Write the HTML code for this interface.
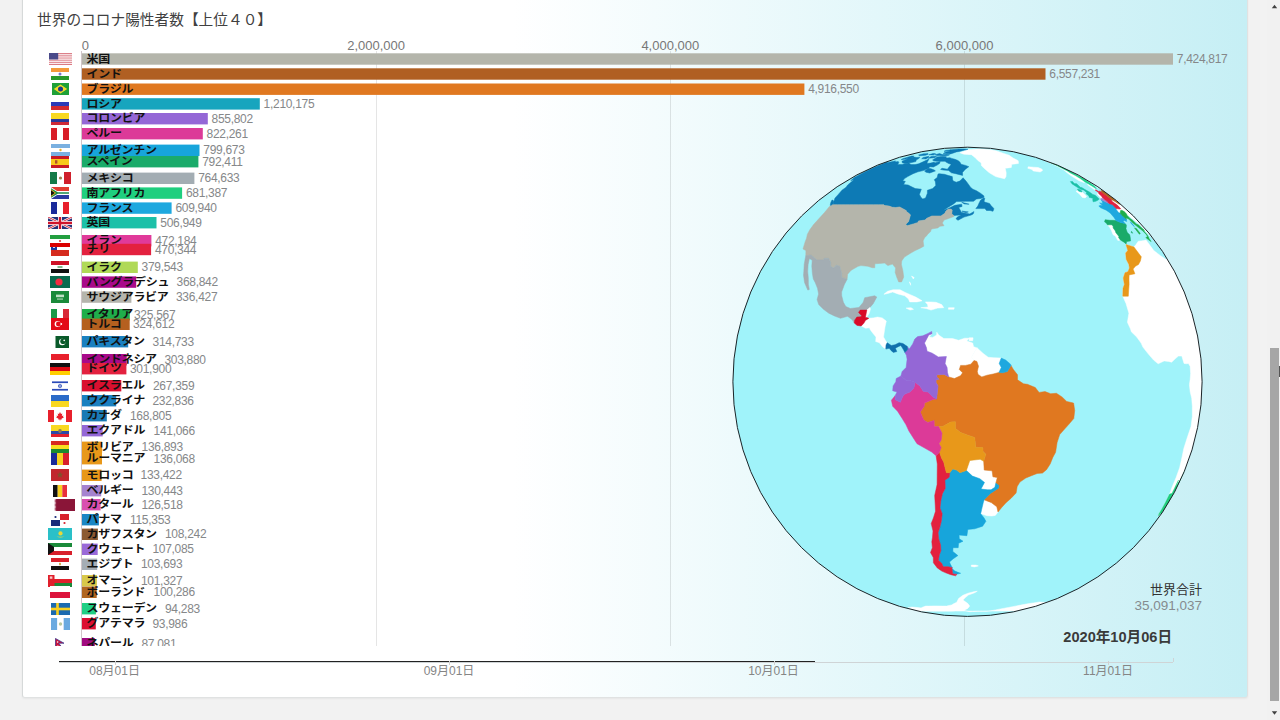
<!DOCTYPE html><html lang="ja"><head><meta charset="utf-8"><title>世界のコロナ陽性者数</title><style>
*{box-sizing:border-box}
html,body{margin:0;padding:0}
body{width:1280px;height:720px;overflow:hidden;background:#f2f2f2;font-family:"Liberation Sans","Noto Sans CJK JP",sans-serif;position:relative}
#card{position:absolute;left:22px;top:-6px;width:1226px;height:704px;border:1px solid #e0e2e2;border-left-color:#d6d9d9;border-radius:3px;background:linear-gradient(to right,#ffffff 0%,#ffffff 40%,#c6eff5 100%);box-shadow:0 1px 2px rgba(0,0,0,.05)}
#stage{position:absolute;left:0;top:0;width:1280px;height:720px;overflow:hidden}
.title{position:absolute;left:37px;top:9.8px;font-size:14.7px;line-height:20px;color:#404040;white-space:nowrap;font-family:"Liberation Sans","Noto Sans CJK JP",sans-serif}
.ax{position:absolute;top:38px;font-size:13px;line-height:15px;color:#777;white-space:nowrap;transform:translateX(-50%)}
.grid{position:absolute;top:51px;width:1px;height:595px;background:rgba(0,0,0,.13)}
#plot{position:absolute;left:0;top:0;width:1280px;height:646px;overflow:hidden}
.bar{position:absolute;display:block}
.lbl{position:absolute;left:86.6px;font-size:12px;line-height:12px;font-weight:bold;color:#111;white-space:nowrap;font-family:"Liberation Sans","Noto Sans CJK JP",sans-serif;letter-spacing:-0.3px;transform:scaleY(0.9);transform-origin:0 50%}
.val{position:absolute;font-size:12px;line-height:12px;color:#858789;white-space:nowrap;letter-spacing:-0.3px}
.flag{position:absolute;height:12px;display:block}
.tl{position:absolute}
.tlab{position:absolute;top:665px;font-size:12px;line-height:13px;color:#858585;white-space:nowrap;transform:translateX(-50%);font-family:"Liberation Sans","Noto Sans CJK JP",sans-serif}
.tick{position:absolute;top:661px;width:1px;height:4px;background:#d0d0d0}
.tot1{position:absolute;right:78px;top:582px;font-size:13px;line-height:16px;color:#333;white-space:nowrap;font-family:"Liberation Sans","Noto Sans CJK JP",sans-serif}
.tot2{position:absolute;right:78px;top:597.5px;font-size:13.5px;line-height:15px;color:#858b8f;white-space:nowrap}
.date{position:absolute;right:108px;top:627px;font-size:14.6px;line-height:20px;font-weight:bold;color:#3a3a3a;white-space:nowrap;font-family:"Liberation Sans","Noto Sans CJK JP",sans-serif}
</style></head><body>
<div id="card"></div><div id="stage">
<div class="title">世界のコロナ陽性者数【上位４０】</div>
<div class="ax" style="left:85.4px">0</div>
<div class="ax" style="left:376.1px">2,000,000</div>
<div class="ax" style="left:670.3px">4,000,000</div>
<div class="ax" style="left:964.5px">6,000,000</div>
<div class="grid" style="left:81px;background:rgba(120,90,100,.35)"></div>
<div class="grid" style="left:376.2px;background:rgba(0,0,0,.10)"></div>
<div class="grid" style="left:670.1px;background:rgba(0,0,0,.10)"></div>
<div class="grid" style="left:964.3px;background:rgba(0,0,0,.10)"></div>
<svg style="position:absolute;left:725px;top:140px" width="485" height="485" viewBox="0 0 485 485">
<defs><clipPath id="gc"><circle cx="242.5" cy="241.8" r="234.6"/></clipPath></defs>
<circle cx="242.5" cy="241.8" r="234.6" fill="#a0f3fa"/>
<g clip-path="url(#gc)" stroke-linejoin="round">
<path d="M198.9,473.4 197.7,473.0 196.7,472.6 195.8,472.2 195.1,471.9 194.5,471.6 194.1,471.5 191.9,470.9 189.7,470.4 187.8,469.9 186.0,469.4 184.5,468.9 183.2,468.4 183.0,468.1 183.1,467.8 183.4,467.5 184.4,467.4 185.7,467.2 187.2,467.1 190.0,467.3 193.0,467.6 196.1,467.9 197.3,467.3 198.8,466.7 200.6,466.1 203.6,466.1 206.9,466.0 210.3,465.9 214.0,466.0 217.8,466.1 221.6,466.1 224.0,465.5 226.6,464.9 229.0,463.6 231.7,462.3 233.6,458.5 237.9,455.3 243.0,453.2 249.5,451.6 252.3,451.2 249.7,452.7 243.4,455.1 240.1,457.8 238.0,460.1 242.9,463.6 244.7,466.1 242.8,468.4 240.8,469.4 239.1,470.4 241.9,471.1 244.4,471.7 247.2,471.6 250.0,471.4 252.9,471.3 255.6,471.3 258.4,471.3 261.0,471.3 263.4,471.1 265.8,470.8 270.5,469.9 275.6,468.9 279.4,468.2 283.3,467.5 287.3,466.7 291.4,465.9 295.6,465.1 299.8,464.3 304.1,463.6 308.4,462.9 311.3,462.5 314.2,462.0 316.1,462.1 317.6,462.2 318.9,462.3 320.2,462.3 321.3,462.3 322.0,462.3 323.4,461.9 324.5,461.6 325.4,461.3 326.1,461.1 326.7,461.2 327.0,461.4 328.6,461.3 330.0,461.5 331.1,462.0 328.4,463.8 325.5,465.7 322.4,467.7 318.5,469.9 314.4,472.0 310.1,474.0 308.8,475.8 307.1,477.8 304.9,480.0 301.0,482.3 296.6,484.4 292.0,486.6 287.3,488.7 282.2,490.8 276.8,492.7 270.4,493.9 264.0,494.9 257.5,495.5 250.9,495.8 244.5,495.7 238.1,495.3 231.7,495.4 225.1,495.1 218.5,494.6 212.7,493.0 207.2,491.3 202.0,489.4 198.0,487.1 194.4,484.9 191.3,482.8 188.7,480.7 186.6,478.8 184.9,477.1 183.9,475.5 183.3,474.2 183.0,473.1 190.9,473.4 199.2,474.0 201.1,474.7 203.2,475.5 205.6,476.2 208.1,477.0 210.8,477.8 213.7,478.5 216.8,479.2 220.0,479.8 223.3,480.4 226.7,480.9 230.2,481.3 233.8,481.6 237.5,481.8 241.2,481.9 244.8,481.9 248.5,481.7 252.1,481.5 255.7,481.2 259.1,480.7 262.5,480.2 265.8,479.6 268.9,479.0 271.8,478.3 274.6,477.5 277.2,476.8 279.7,476.0 281.9,475.3 283.9,474.6 285.7,473.9 287.3,473.3 288.7,472.7 289.9,472.2 290.8,471.8 291.6,471.4 292.1,471.2 292.4,471.1 292.4,471.0 292.3,471.0 291.9,471.0 291.2,471.0 290.4,471.0 289.3,471.0 287.9,471.1 286.4,471.1 284.6,471.1 282.6,471.1 280.5,471.1 278.2,471.1 275.6,471.1 273.0,471.1 270.2,471.1 267.2,471.1 264.2,471.1 261.0,471.1 257.7,471.1 254.4,471.1 251.0,471.1 247.6,471.1 244.2,471.1 240.8,471.1 237.3,471.1 233.9,471.1 230.6,471.1 227.3,471.2 224.1,471.2 220.9,471.2 217.9,471.2 215.0,471.2 212.2,471.2 209.6,471.2 207.2,471.2 204.9,471.2 202.8,471.2 200.9,471.2 199.2,471.2 197.7,471.2 196.5,471.2 195.4,471.2 194.6,471.2 194.0,471.2 193.7,471.2 193.6,471.2 193.7,471.3 194.0,471.4 194.6,471.7 195.3,472.0 196.3,472.4 197.5,472.9Z" fill="#ffffff" stroke="#ffffff" stroke-width="0.5"/>
<path d="M401.0,104.6 402.8,110.6 400.7,113.0 401.2,119.2 403.9,124.5 404.4,128.1 403.0,131.7 400.0,132.7 398.3,137.9 399.4,144.5 398.0,148.3 397.8,156.2 401.0,163.5 403.9,173.2 402.4,182.3 405.5,189.0 406.3,191.8 411.7,197.0 416.1,203.1 417.9,207.1 423.0,213.6 428.6,220.1 433.2,223.8 439.1,220.9 443.5,221.4 446.6,222.2 451.0,218.1 453.5,216.1 456.8,216.1 459.0,223.4 461.3,223.8 463.4,223.4 465.1,226.3 465.6,233.6 465.1,239.8 464.4,244.7 465.2,252.0 466.7,258.2 467.3,266.3 467.3,276.5 466.0,286.6 462.6,296.6 458.8,308.4 457.2,316.2 454.6,327.8 451.2,337.2 446.6,348.3 444.6,354.1 440.4,362.6 436.6,369.6 434.0,373.7 433.4,375.7 436.2,373.0 436.9,373.0 439.3,369.6 444.8,361.1 450.0,352.5 452.4,348.3 458.1,338.7 463.7,327.9 469.0,316.8 474.0,305.4 476.9,292.8 479.1,280.1 480.6,267.4 483.3,254.8 485.4,241.8 487.9,224.5 489.3,206.3 489.5,187.1 484.2,188.4 479.9,189.4 475.1,179.1 470.3,169.2 465.4,159.5 460.7,149.6 455.7,140.0 450.3,130.6 443.5,119.6 443.2,120.1 442.5,119.2 441.7,118.2 441.4,118.7 440.7,119.2 438.3,117.5 435.5,115.7 432.3,113.2 428.8,110.6 421.0,100.0 418.9,100.6 416.2,100.9 413.2,101.3 411.0,104.6 408.9,106.9Z" fill="#ffffff" stroke="#ffffff" stroke-width="0.5"/>
<path d="M393.5,72.5 391.2,69.4 391.1,68.6 393.2,68.8 394.2,69.1 395.8,68.8 392.5,65.3 386.9,61.3 386.4,59.5 390.1,61.6 393.4,63.7 395.5,64.5 391.4,60.8 388.2,58.2 384.0,54.9 378.6,51.0 374.5,48.5 369.4,45.0 366.6,42.8 361.2,39.7 361.1,39.5 360.9,39.2 359.8,38.5 358.0,37.6 358.8,38.1 359.4,38.6 355.6,36.6 348.4,32.8 341.5,29.2 338.5,27.8 330.1,24.3 325.9,22.8 326.3,22.8 326.5,22.8 325.0,22.2 323.5,21.6 326.8,22.7 329.9,23.6 332.7,24.3 334.3,24.4 335.6,24.2 336.6,23.6 348.9,28.4 361.1,34.0 373.1,40.2 384.9,47.1 396.4,54.8 407.7,63.3 410.1,68.6 412.3,73.5 414.3,77.8 416.1,81.7 417.8,85.0 419.6,87.7 424.8,94.1 429.9,100.6 430.4,101.4 430.7,102.3 426.7,97.4 420.4,91.0 415.1,84.8 409.1,80.3 401.8,74.2 399.2,71.6 396.7,70.2 395.6,70.5 395.3,71.9 395.2,73.3Z" fill="#ffffff" stroke="#ffffff" stroke-width="0.5"/>
<path d="M279.6,38.8 275.1,37.7 270.6,36.6 264.3,32.8 260.2,29.2 256.5,25.8 256.1,22.8 253.1,20.7 250.0,17.5 246.4,14.7 242.6,14.4 238.8,14.2 236.7,13.4 234.8,12.8 238.1,11.5 240.6,10.6 242.7,9.8 244.4,9.6 246.1,9.5 247.6,9.3 249.0,9.2 250.7,9.1 252.2,8.9 253.5,8.8 254.7,8.7 256.8,8.9 259.0,9.1 261.3,9.3 263.6,9.5 267.2,10.1 271.0,10.8 278.0,13.2 284.1,15.2 288.1,18.1 293.2,20.7 293.4,22.1 293.4,23.5 290.2,23.9 286.8,24.3 286.3,27.5 283.3,27.9 280.2,28.3 281.2,32.8 281.0,36.6Z" fill="#ffffff" stroke="#ffffff" stroke-width="0.5"/>
<path d="M302.8,28.3 303.2,26.8 306.0,27.0 308.6,27.2 313.2,27.5 317.1,29.2 317.5,30.6 315.2,32.0 310.2,31.3 308.1,30.9 307.1,29.5Z" fill="#ffffff" stroke="#ffffff" stroke-width="0.5"/>
<path d="M354.0,40.7 345.8,35.6 342.1,32.8 339.0,30.1 333.0,26.7 326.4,23.5 321.7,21.3 320.2,20.7 318.6,20.0 318.8,20.0 318.9,20.0 323.5,21.6 325.0,22.2 326.5,22.8 326.3,22.8 325.9,22.8 327.3,23.5 332.3,25.8 337.2,28.3 342.4,30.9 345.1,32.8 350.5,35.6 355.4,38.6 358.4,40.7 357.9,40.7 359.5,42.8Z" fill="#ffffff" stroke="#ffffff" stroke-width="0.5"/>
<path d="M369.3,49.6 362.9,45.0 362.6,43.7 369.4,48.5 371.2,50.1 370.1,49.9Z" fill="#ffffff" stroke="#ffffff" stroke-width="0.5"/>
<path d="M375.9,58.5 374.8,56.9 372.5,54.4 372.2,53.2 373.8,53.7 376.7,56.2 377.0,57.2 380.3,60.0 378.9,59.0 377.2,58.2 376.8,58.5Z" fill="#ffffff" stroke="#ffffff" stroke-width="0.5"/>
<path d="M357.3,57.4 360.1,57.9 361.7,56.4 358.6,53.2 357.0,52.0 354.6,51.5 353.0,50.6 352.2,49.2 352.2,50.6 351.1,51.5 354.4,53.9 356.3,56.2Z" fill="#ffffff" stroke="#ffffff" stroke-width="0.5"/>
<path d="M382.7,85.1 383.7,84.8 386.5,84.8 388.1,86.0 388.2,87.9 390.4,91.0 390.8,92.6 393.9,96.4 393.6,97.4 395.4,100.0 392.9,100.6 390.3,96.1 388.1,94.8 386.4,90.4 384.6,87.3Z" fill="#ffffff" stroke="#ffffff" stroke-width="0.5"/>
<path d="M107.9,64.7 108.7,62.1 109.9,58.2 113.3,54.4 116.9,50.3 121.1,47.3 122.7,45.0 126.5,41.8 129.2,39.2 125.7,40.7 128.3,38.6 128.5,38.0 136.8,33.4 145.3,29.2 153.7,25.4 162.3,21.9 162.5,22.1 161.4,22.9 165.0,22.1 166.8,21.7 168.8,21.3 170.7,20.9 169.5,22.1 171.4,21.8 173.3,21.6 173.5,22.2 173.9,22.8 172.6,24.3 173.4,24.6 177.2,24.4 180.4,23.5 183.9,23.1 184.8,23.8 185.9,24.6 190.1,24.6 193.7,23.8 197.5,22.1 204.0,18.9 203.1,20.7 202.4,22.1 201.9,23.5 205.7,23.1 209.5,22.1 209.1,23.1 215.2,21.6 214.5,23.5 212.2,25.1 208.4,27.0 204.9,26.7 203.4,28.3 201.1,29.2 198.2,30.6 193.0,31.8 188.0,33.7 182.7,36.6 179.5,38.6 177.7,41.1 180.3,41.3 178.6,44.6 183.1,45.0 186.1,46.6 190.2,48.5 196.3,49.2 194.4,54.4 196.0,57.4 197.8,59.0 200.6,57.9 202.4,53.2 202.4,50.3 207.7,48.5 210.8,45.5 210.4,41.8 209.3,39.7 212.2,37.6 213.0,34.1 214.1,33.7 219.4,34.3 223.6,35.6 227.3,36.6 227.6,39.7 228.3,41.1 231.3,42.2 234.7,41.1 236.9,39.0 238.1,37.8 241.0,41.1 243.2,43.9 245.5,47.3 247.9,49.2 251.5,50.8 255.4,53.2 258.7,55.7 259.1,57.2 256.0,58.5 251.5,59.0 248.5,61.3 240.7,61.3 231.5,61.6 228.6,63.9 222.8,67.5 218.3,70.5 222.6,68.8 229.8,65.3 236.6,64.2 237.1,66.4 233.7,67.5 235.0,69.7 236.3,72.2 239.1,73.0 244.8,73.9 249.0,71.6 248.2,73.9 246.2,75.0 239.0,77.1 233.0,80.3 231.0,78.8 232.3,77.1 236.2,75.0 231.8,75.3 228.9,75.6 226.8,73.9 227.2,69.9 225.9,69.1 223.4,69.0 220.9,71.1 219.8,73.3 217.3,75.0 216.0,75.9 206.9,75.9 201.8,78.2 200.0,80.0 193.4,80.9 193.0,82.4 188.3,83.9 182.0,85.7 180.8,84.2 183.5,81.8 185.5,75.0 183.6,73.0 181.5,71.6 181.2,70.5 174.7,66.9 170.7,67.5 167.3,67.2 164.3,66.1 159.8,65.6 158.9,64.7 153.6,64.7 148.4,64.7 143.2,64.7 138.1,64.7 133.3,64.7 128.7,64.7 124.3,64.7 120.1,64.7 116.1,64.7 112.4,64.7 107.9,64.7ZM250.8,68.6 252.8,66.1 253.9,63.4 255.5,60.3 258.5,57.9 259.8,58.2 259.0,61.6 260.4,62.3 264.5,63.4 266.2,65.8 267.9,67.5 268.9,68.8 268.0,71.3 265.1,70.5 261.5,70.5 259.9,68.6 255.7,68.6ZM243.8,26.7 240.4,29.2 237.5,32.4 237.6,35.4 230.8,33.7 226.4,32.8 223.6,30.4 218.6,30.1 215.6,29.4 217.0,28.3 222.4,29.2 224.3,26.7 226.2,24.3 223.6,23.5 221.0,22.1 220.1,21.3 218.1,21.3 215.5,21.3 211.5,21.3 208.5,20.7 207.6,20.0 210.8,18.1 212.0,16.9 214.4,16.7 216.7,16.5 219.0,16.6 221.3,16.7 221.1,18.1 224.9,17.7 226.7,18.4 230.0,19.3 233.4,20.7 235.0,22.3 236.1,24.3 240.6,25.4ZM185.5,22.8 182.4,23.0 179.5,23.2 178.2,22.9 177.1,22.5 177.0,21.3 181.4,19.3 183.9,18.1 188.9,17.1 190.3,17.3 191.8,17.5 194.8,17.2 194.1,18.3 191.2,20.0 190.8,21.6ZM177.8,18.7 176.2,19.7 179.6,19.3 187.8,16.9 189.1,16.1 187.8,16.1 186.5,16.1ZM242.9,9.3 240.9,9.8 239.5,10.1 238.0,10.4 236.2,10.9 234.3,11.4 231.4,11.9 227.8,13.2 225.6,13.9 223.9,13.8 222.3,13.7 220.2,13.6 218.3,13.5 220.2,12.3 225.3,11.1 224.8,10.8 224.5,10.4 224.9,9.9 226.9,9.7 228.9,9.5 231.4,9.2 233.8,8.9 235.4,8.9 237.1,8.9 238.7,8.9 240.0,9.0 241.4,9.2ZM224.6,14.7 223.0,15.6 220.2,15.7 217.3,15.7 214.5,15.6 211.8,15.5 210.8,15.1 209.9,14.7 214.7,13.6 215.9,14.1 217.2,14.6 219.3,14.4 221.4,14.3 223.0,14.5ZM210.4,30.9 204.7,33.0 201.0,32.2 199.5,30.9 203.5,28.2 206.1,28.8 209.3,30.1ZM106.3,66.4 105.2,65.3 105.8,62.6 106.8,60.3 107.9,60.0 108.7,61.6 107.8,64.2ZM209.7,17.7 206.6,18.0 203.4,18.3 206.0,16.6 209.7,16.2 211.6,16.5ZM200.8,18.9 198.7,18.8 196.7,18.7 198.2,17.5 203.9,16.3 203.5,17.5ZM200.6,15.2 197.6,15.5 194.7,15.7 194.1,15.4 193.6,15.0 198.6,13.8 200.7,13.7 202.9,13.6 203.3,14.2ZM208.4,15.0 206.1,14.9 203.9,14.8 208.0,13.5 209.3,13.6 210.5,13.7ZM225.8,10.9 223.5,11.0 221.3,11.2 219.0,11.3 221.0,10.4 223.2,10.2 225.3,10.0 225.8,10.2 226.5,10.4ZM236.7,62.3 244.1,64.2 239.3,63.9ZM236.9,71.1 243.3,71.9 240.5,72.8Z" fill="#0d7ab5" stroke="#0d7ab5" stroke-width="0.5"/>
<path d="M107.9,64.7 104.5,66.4 99.5,72.5 93.8,78.8 88.4,84.8 84.8,89.8 82.4,94.2 81.6,98.0 80.1,101.9 78.0,108.9 80.9,110.6 80.8,115.7 86.1,115.1 91.9,119.9 98.5,119.9 99.3,118.2 103.5,118.2 105.8,122.4 105.6,126.3 108.4,128.1 111.4,125.2 114.8,126.3 116.7,133.5 116.6,137.5 122.1,139.3 122.6,134.2 126.2,130.2 133.1,126.3 136.0,125.6 142.9,126.3 147.2,127.7 149.8,127.7 149.8,123.8 154.7,123.4 159.6,123.1 162.9,125.6 167.5,124.1 170.6,128.1 170.2,132.4 171.7,137.1 173.7,141.9 176.6,141.9 178.7,137.1 177.9,130.9 176.4,124.5 176.7,121.0 179.4,117.1 185.4,113.3 190.2,110.6 195.2,108.2 198.8,106.2 198.1,100.9 199.6,97.7 201.9,95.4 202.7,94.2 205.6,91.6 206.4,89.1 212.7,87.9 215.0,86.3 219.0,85.7 217.3,83.0 219.1,80.0 222.8,78.8 228.9,76.5 228.9,75.6 226.8,73.9 227.2,69.9 225.9,69.1 223.4,69.0 220.9,71.1 219.8,73.3 217.3,75.0 216.0,75.9 206.9,75.9 201.8,78.2 200.0,80.0 193.4,80.9 193.0,82.4 188.3,83.9 182.0,85.7 180.8,84.2 183.5,81.8 185.5,75.0 183.6,73.0 181.5,71.6 181.2,70.5 174.7,66.9 170.7,67.5 167.3,67.2 164.3,66.1 159.8,65.6 158.9,64.7 153.6,64.7 148.4,64.7 143.2,64.7 138.1,64.7 133.3,64.7 128.7,64.7 124.3,64.7 120.1,64.7 116.1,64.7 112.4,64.7 107.9,64.7Z" fill="#b4b5ab" stroke="#b4b5ab" stroke-width="0.5"/>
<path d="M80.8,115.7 80.1,119.2 79.2,124.5 78.8,131.7 78.5,135.3 79.6,142.7 82.8,150.1 84.3,149.4 83.4,144.5 83.3,137.9 82.7,131.7 83.1,124.5 84.4,118.5 87.2,120.3 86.8,126.3 87.4,133.5 88.3,139.0 90.3,142.7 92.5,148.3 93.6,153.9 92.1,159.6 93.7,164.6 98.5,169.3 103.8,173.2 109.5,176.0 115.6,178.3 122.5,176.3 127.0,179.5 129.3,183.1 129.6,180.3 131.8,177.1 136.0,176.7 136.5,175.6 133.5,172.4 135.2,170.1 141.8,170.1 145.0,167.4 148.3,163.5 151.8,157.0 149.6,155.8 139.7,157.7 138.2,162.3 134.0,167.4 125.4,168.5 120.8,166.6 118.4,162.3 116.7,155.8 116.6,152.0 119.4,144.5 122.1,139.3 116.6,137.5 116.7,133.5 114.8,126.3 111.4,125.2 108.4,128.1 105.6,126.3 105.8,122.4 103.5,118.2 99.3,118.2 98.5,119.9 91.9,119.9 86.1,115.1 80.8,115.7Z" fill="#a3adb3" stroke="#a3adb3" stroke-width="0.5"/>
<path d="M141.8,170.1 145.0,167.4 145.4,169.3 144.2,173.2 141.5,177.5 140.4,177.5Z" fill="#ffffff" stroke="#ffffff" stroke-width="0.5"/>
<path d="M136.2,186.0 138.6,183.5 139.9,181.5 140.0,180.7 143.8,178.3 148.2,177.9 152.6,177.1 157.2,177.9 161.3,181.1 160.0,187.0 159.1,193.0 158.5,197.0 160.8,201.1 162.2,202.7 161.0,205.1 160.8,209.1 157.8,207.1 154.4,202.7 150.7,201.5 151.0,197.0 147.7,193.0 145.1,189.4 144.6,187.8 140.6,188.2Z" fill="#ffffff" stroke="#ffffff" stroke-width="0.5"/>
<path d="M158.9,154.3 162.5,151.3 168.0,149.8 175.1,149.8 180.2,152.4 185.4,154.7 190.7,157.0 197.1,160.8 192.1,161.9 184.7,161.9 183.5,158.9 179.8,155.8 172.8,153.9 167.7,152.0 162.8,153.5ZM195.8,167.7 201.1,168.5 206.0,170.1 212.7,168.1 218.8,167.7 216.7,164.6 211.0,162.3 205.3,161.9 200.4,161.9 202.5,164.6 203.1,167.0ZM181.1,168.1 186.0,167.7 188.5,169.3 185.1,170.1ZM223.5,167.7 229.3,167.7 228.9,169.3 223.4,169.3ZM184.3,141.9 185.7,145.3 185.3,142.7ZM186.5,136.0 189.2,137.5 188.3,139.0ZM244.1,197.8 248.1,197.8 247.7,200.7 244.1,200.7ZM246.3,425.1 250.9,425.1 253.4,425.9 249.5,426.9 246.3,426.4Z" fill="#ffffff" stroke="#ffffff" stroke-width="0.5"/>
<path d="M207.0,193.8 204.1,197.0 207.7,197.4 211.7,195.0 211.8,192.2 213.7,195.0 218.8,198.6 227.6,198.6 233.6,200.3 239.7,198.2 244.1,198.2 241.7,201.1 247.7,203.1 248.6,206.7 252.2,207.9 249.8,211.2 246.6,217.3 249.0,220.5 245.8,224.2 240.5,225.4 235.6,225.4 234.3,229.5 237.6,232.8 235.5,235.7 229.4,238.5 223.7,236.9 222.5,232.4 222.1,227.5 220.1,223.4 221.4,216.5 213.3,216.9 207.3,213.2 202.1,211.2 201.4,207.5 199.5,203.1 201.7,199.0 203.8,195.0 207.0,193.8Z" fill="#ffffff" stroke="#ffffff" stroke-width="0.5"/>
<path d="M252.2,207.9 257.9,213.2 263.2,217.3 268.5,217.7 276.2,218.1 274.2,223.4 276.3,227.5 273.9,232.4 268.2,234.0 262.1,235.2 256.8,236.9 253.1,234.4 252.3,231.6 253.5,226.3 251.9,221.4 249.0,220.5 246.6,217.3 249.8,211.2 252.2,207.9Z" fill="#ffffff" stroke="#ffffff" stroke-width="0.5"/>
<path d="M241.4,330.4 247.4,336.1 254.8,338.7 259.5,342.4 256.0,349.0 262.5,349.8 266.1,349.8 269.9,347.2 270.8,343.2 272.3,337.6 267.9,336.8 267.1,330.8 259.2,330.1 258.7,321.3 255.2,319.3 244.8,320.5Z" fill="#ffffff" stroke="#ffffff" stroke-width="0.5"/>
<path d="M255.7,373.7 256.6,369.6 258.3,362.6 259.1,359.8 264.6,361.9 266.3,362.6 271.8,366.8 273.0,372.0 270.3,375.4 266.9,376.0 262.0,375.7 257.7,374.3Z" fill="#ffffff" stroke="#ffffff" stroke-width="0.5"/>
<path d="M286.0,225.4 288.4,229.5 292.5,234.8 292.5,239.8 298.5,243.8 302.4,244.3 310.3,247.5 314.1,252.4 320.0,251.6 325.7,253.7 331.4,253.3 337.0,256.9 341.7,261.4 348.6,263.1 349.7,270.4 348.8,278.5 343.6,284.6 339.6,289.0 334.7,294.6 332.1,302.5 330.6,312.3 327.8,317.4 325.2,324.0 321.5,329.7 317.5,333.1 312.1,333.5 306.4,335.7 300.8,338.0 294.9,342.1 292.2,346.5 291.1,353.0 285.9,358.4 281.2,362.6 276.9,367.2 273.0,372.0 271.8,366.8 266.3,362.6 264.6,361.9 259.1,359.8 265.1,353.7 268.9,351.2 273.4,348.3 274.0,345.4 270.8,343.2 272.3,337.6 267.9,336.8 267.1,330.8 259.2,330.1 258.7,321.3 260.8,314.3 258.1,311.6 257.8,307.6 250.8,307.3 249.7,297.4 243.7,295.4 235.7,292.6 230.5,288.6 230.4,281.7 225.6,282.1 217.6,286.6 213.6,286.6 209.3,286.6 209.1,280.5 202.8,282.5 198.7,280.1 195.3,272.0 199.2,266.3 199.5,263.1 207.9,259.4 211.6,259.0 213.1,245.9 211.1,242.6 211.1,239.8 214.3,239.3 211.9,237.3 211.9,234.8 219.2,234.4 223.7,236.9 229.4,238.5 235.5,235.7 237.6,232.8 234.3,229.5 235.6,225.4 240.5,225.4 245.8,224.2 249.0,220.5 251.9,221.4 253.5,226.3 252.3,231.6 253.1,234.4 256.8,236.9 262.1,235.2 268.2,234.0 273.9,232.4 277.6,232.8 282.4,231.6Z" fill="#e07820" stroke="#e07820" stroke-width="0.5"/>
<path d="M241.4,330.4 235.0,332.7 231.5,330.1 227.7,328.9 224.8,332.7 224.2,337.2 219.9,340.2 220.3,348.3 217.4,353.7 215.8,360.9 215.0,367.9 217.2,373.7 216.3,381.3 214.7,387.8 213.1,392.6 213.7,398.8 215.5,404.8 215.9,410.6 214.4,414.8 213.4,420.2 216.7,423.3 218.2,426.7 223.1,426.7 227.3,427.7 225.3,424.1 224.5,422.0 228.0,418.9 232.9,415.6 227.8,411.4 228.0,407.7 233.2,407.7 233.6,403.3 238.0,401.2 234.3,398.8 234.1,395.1 241.9,395.7 242.8,389.4 249.8,388.8 257.6,386.2 260.9,381.3 259.1,378.0 255.7,373.7 256.6,369.6 258.3,362.6 259.1,359.8 265.1,353.7 268.9,351.2 273.4,348.3 274.0,345.4 270.8,343.2 269.9,347.2 266.1,349.8 262.5,349.8 256.0,349.0 259.5,342.4 254.8,338.7 247.4,336.1ZM226.9,428.4 227.7,433.7 232.6,434.0 235.6,433.3 232.4,432.1 229.9,431.1Z" fill="#17a5db" stroke="#17a5db" stroke-width="0.5"/>
<path d="M211.1,315.7 212.3,324.0 212.2,335.3 212.1,344.6 209.7,355.5 210.2,364.4 210.5,371.3 208.4,378.0 206.2,383.6 208.0,391.0 207.5,397.3 206.8,401.8 207.4,407.7 205.5,412.5 208.3,417.5 208.4,422.8 212.3,427.9 216.8,431.1 220.7,432.8 225.8,434.7 230.5,435.8 232.0,434.4 227.7,433.7 226.9,428.4 227.3,427.7 223.1,426.7 218.2,426.7 216.7,423.3 213.4,420.2 214.4,414.8 215.9,410.6 215.5,404.8 213.7,398.8 213.1,392.6 214.7,387.8 216.3,381.3 217.2,373.7 215.0,367.9 215.8,360.9 217.4,353.7 220.3,348.3 219.9,340.2 224.2,337.2 224.8,332.7 221.4,332.7 220.1,327.8 218.7,322.0 216.6,318.2 214.5,312.3Z" fill="#e3213f" stroke="#e3213f" stroke-width="0.5"/>
<path d="M214.5,312.3 216.2,307.6 214.1,303.7 216.4,299.7 217.0,293.0 213.6,286.6 217.6,286.6 225.6,282.1 230.4,281.7 230.5,288.6 235.7,292.6 243.7,295.4 249.7,297.4 250.8,307.3 257.8,307.6 258.1,311.6 260.8,314.3 258.7,321.3 255.2,319.3 244.8,320.5 241.4,330.4 235.0,332.7 231.5,330.1 227.7,328.9 224.8,332.7 221.4,332.7 220.1,327.8 218.7,322.0 216.6,318.2Z" fill="#e8981a" stroke="#e8981a" stroke-width="0.5"/>
<path d="M170.1,255.7 166.4,260.2 167.7,266.3 172.5,271.2 176.7,277.7 180.9,284.6 183.9,291.0 187.7,297.0 192.0,303.7 198.8,307.6 206.7,312.0 211.1,315.7 214.5,312.3 216.2,307.6 214.1,303.7 216.4,299.7 217.0,293.0 213.6,286.6 209.3,286.6 209.1,280.5 202.8,282.5 198.7,280.1 195.3,272.0 199.2,266.3 199.5,263.1 207.9,259.4 211.6,259.0 208.3,257.3 203.0,252.0 198.2,251.2 194.9,245.9 190.1,242.2 188.9,247.9 185.0,252.0 179.9,254.1 178.0,256.1 175.3,262.2 170.2,259.8Z" fill="#dc3a98" stroke="#dc3a98" stroke-width="0.5"/>
<path d="M175.9,236.1 181.0,240.2 185.0,240.6 190.1,242.2 188.9,247.9 185.0,252.0 179.9,254.1 178.0,256.1 175.3,262.2 170.2,259.8 170.1,255.7 172.0,252.0 167.7,250.8 168.1,245.9 170.8,241.8 171.2,238.5Z" fill="#9467d6" stroke="#9467d6" stroke-width="0.5"/>
<path d="M182.1,206.3 184.3,209.1 187.7,203.9 189.8,199.0 192.7,196.6 197.8,195.8 203.0,193.4 206.7,191.4 207.0,193.8 203.8,195.0 201.7,199.0 199.5,203.1 201.4,207.5 202.1,211.2 207.3,213.2 213.3,216.9 221.4,216.5 220.1,223.4 222.1,227.5 222.5,232.4 223.7,236.9 219.2,234.4 211.9,234.8 211.9,237.3 214.3,239.3 211.1,239.8 211.1,242.6 213.1,245.9 211.6,259.0 208.3,257.3 203.0,252.0 198.2,251.2 194.9,245.9 190.1,242.2 185.0,240.6 181.0,240.2 175.9,236.1 177.1,231.6 181.1,227.5 182.1,219.3 181.4,215.2 179.9,212.4 182.7,209.6Z" fill="#9467d6" stroke="#9467d6" stroke-width="0.5"/>
<path d="M160.8,209.1 161.0,205.1 162.2,202.7 166.3,205.5 170.1,204.7 174.1,202.7 177.9,203.5 182.1,206.3 182.7,209.6 179.9,212.4 178.1,209.1 175.9,205.5 173.1,206.7 170.4,208.3 171.8,211.6 168.3,212.4 166.0,210.4 164.2,208.3Z" fill="#0f70ac" stroke="#0f70ac" stroke-width="0.5"/>
<path d="M129.3,183.1 132.1,185.4 136.2,186.0 138.6,183.5 139.9,181.5 140.0,180.7 143.8,178.3 141.5,177.5 140.4,177.5 141.8,170.1 135.2,170.1 133.5,172.4 136.5,175.6 136.0,176.7 131.8,177.1 129.6,180.3 129.3,183.1Z" fill="#d80a28" stroke="#d80a28" stroke-width="0.5"/>
<path d="M276.2,218.1 280.7,220.1 285.5,224.2 286.0,225.4 282.4,231.6 277.6,232.8 273.9,232.4 276.3,227.5 274.2,223.4 276.2,218.1Z" fill="#1ea8df" stroke="#1ea8df" stroke-width="0.5"/>
<path d="M401.0,104.6 408.9,106.9 412.9,112.3 416.3,116.8 415.4,121.0 413.5,124.5 410.4,126.3 408.1,129.1 409.9,133.8 404.1,134.9 404.0,139.0 404.1,144.5 403.7,150.1 403.3,156.2 397.8,156.2 398.0,148.3 399.4,144.5 398.3,137.9 400.0,132.7 403.0,131.7 404.4,128.1 403.9,124.5 401.2,119.2 400.7,113.0 402.8,110.6Z" fill="#e8981a" stroke="#e8981a" stroke-width="0.5"/>
<path d="M444.6,354.1 440.4,362.6 436.6,369.6 434.0,373.7 433.4,375.7 436.2,373.0 436.9,373.0 439.3,369.6 444.8,361.1 450.0,352.5 452.4,348.3 453.7,345.1 456.4,339.5 459.7,331.5 459.8,330.5 457.5,335.7 453.9,343.2 453.9,342.1 450.4,347.6 453.5,340.2 447.0,353.4Z" fill="#1fcf7f" stroke="#1fcf7f" stroke-width="0.5"/>
<path d="M382.7,85.1 381.4,83.3 379.5,81.8 380.2,79.7 384.9,80.3 388.1,80.3 390.9,80.6 396.1,82.7 400.1,83.6 401.4,85.1 401.3,87.0 400.9,88.5 402.3,92.6 404.7,94.8 405.3,97.7 405.6,100.9 401.7,101.6 401.1,103.9 398.6,101.9 395.4,100.0 393.6,97.4 393.9,96.4 390.8,92.6 390.4,91.0 388.2,87.9 388.1,86.0 386.5,84.8 383.7,84.8ZM406.2,92.6 406.5,91.3 407.7,93.2Z" fill="#1aab6a" stroke="#1aab6a" stroke-width="0.5"/>
<path d="M390.9,80.6 389.0,77.4 385.2,73.0 381.2,70.2 375.6,67.7 373.8,66.1 375.4,65.3 377.8,65.8 374.6,62.9 377.6,63.4 377.2,61.6 375.9,59.4 380.8,62.1 383.9,63.4 384.7,63.7 387.6,64.7 391.1,68.6 391.2,69.4 393.5,72.5 395.2,73.3 397.1,75.6 400.7,78.5 401.4,79.4 401.7,81.5 399.2,80.6 398.1,81.2 400.1,83.6 396.1,82.7ZM406.2,83.6 405.4,81.8 408.4,85.1 409.4,86.7Z" fill="#1ea8df" stroke="#1ea8df" stroke-width="0.5"/>
<path d="M375.9,59.4 375.9,58.5 376.8,58.5 377.2,58.2 378.9,59.0 380.3,60.0 382.1,61.3 383.9,63.4 380.8,62.1Z" fill="#a583d0" stroke="#a583d0" stroke-width="0.5"/>
<path d="M380.3,60.0 377.0,57.2 376.7,56.2 373.8,53.7 373.7,52.7 370.1,49.9 371.2,50.1 374.6,52.0 374.3,51.0 376.9,52.2 381.7,55.7 386.4,59.5 386.9,61.3 392.5,65.3 395.8,68.8 394.2,69.1 393.2,68.8 391.1,68.6 387.6,64.7 384.7,63.7 383.9,63.4 382.1,61.3Z" fill="#e3213f" stroke="#e3213f" stroke-width="0.5"/>
<path d="M401.4,79.4 400.7,78.5 397.1,75.6 395.2,73.3 395.3,71.9 395.6,70.5 396.7,70.2 399.2,71.6 401.8,74.2 401.6,75.0 404.7,78.2 407.5,80.3 411.2,83.9 413.5,85.1 419.4,90.4 417.8,89.4 419.9,92.3 421.7,94.2 423.6,97.4 423.3,97.4 421.0,94.2 417.3,90.4 413.2,87.3 408.2,83.3 403.7,79.1 401.1,77.7ZM420.9,97.4 422.8,96.7 426.1,101.6 421.6,98.3ZM414.4,94.2 409.5,87.9 411.4,88.5 415.3,93.5Z" fill="#1fae4b" stroke="#1fae4b" stroke-width="0.5"/>
<path d="M376.9,52.2 376.1,50.8 376.3,50.3 377.8,51.0 378.6,51.0 384.0,54.9 388.2,58.2 391.4,60.8 395.5,64.5 393.4,63.7 390.1,61.6 386.4,59.5 381.7,55.7Z" fill="#b06520" stroke="#b06520" stroke-width="0.5"/>
<path d="M358.4,40.7 355.4,38.6 350.5,35.6 345.1,32.8 342.4,30.9 337.2,28.3 332.3,25.8 327.3,23.5 325.9,22.8 330.1,24.3 338.5,27.8 342.9,30.1 349.4,33.7 354.3,36.6 359.1,39.0 362.9,41.8 369.5,46.2 370.2,47.3 371.4,48.7 367.5,46.2 360.7,42.2Z" fill="#1fcf85" stroke="#1fcf85" stroke-width="0.5"/>
<path d="M368.1,61.8 370.7,61.3 372.8,60.3 374.3,59.0 370.3,55.2 367.8,54.4 364.4,52.0 360.0,49.6 356.7,47.5 355.3,47.3 351.7,43.7 349.2,43.5 347.6,41.6 345.4,41.6 347.1,43.9 352.3,47.3 356.0,49.6 358.5,49.9 361.6,52.5 361.1,53.7 364.0,55.9 364.0,57.2 368.3,58.5 367.7,59.5ZM353.0,50.6 352.2,49.2 353.9,49.2 356.5,50.8 357.0,52.0 354.6,51.5Z" fill="#1cc0a8" stroke="#1cc0a8" stroke-width="0.5"/>
</g>
<circle cx="242.5" cy="241.8" r="234.6" fill="none" stroke="#1c2428" stroke-width="1"/>
</svg>
<div id="plot">
<svg class="bar" style="top:0;left:0" width="1280" height="646"><rect x="82" y="53.3" width="1091.0" height="11.4" fill="#b4b5ab"/></svg>
<svg class="flag" style="left:48.5px;top:53.0px;width:23px" viewBox="0 0 23 12" width="23" height="12"><rect x="0" y="0.00" width="23" height="0.95" fill="#d8707a"/><rect x="0" y="0.92" width="23" height="0.95" fill="#fbeef0"/><rect x="0" y="1.85" width="23" height="0.95" fill="#d8707a"/><rect x="0" y="2.77" width="23" height="0.95" fill="#fbeef0"/><rect x="0" y="3.69" width="23" height="0.95" fill="#d8707a"/><rect x="0" y="4.62" width="23" height="0.95" fill="#fbeef0"/><rect x="0" y="5.54" width="23" height="0.95" fill="#d8707a"/><rect x="0" y="6.46" width="23" height="0.95" fill="#fbeef0"/><rect x="0" y="7.38" width="23" height="0.95" fill="#d8707a"/><rect x="0" y="8.31" width="23" height="0.95" fill="#fbeef0"/><rect x="0" y="9.23" width="23" height="0.95" fill="#d8707a"/><rect x="0" y="10.15" width="23" height="0.95" fill="#fbeef0"/><rect x="0" y="11.08" width="23" height="0.95" fill="#d8707a"/><rect x="0" y="0" width="9.2" height="6.46" fill="#4a4a8a"/></svg>
<div class="lbl" style="top:52.6px">米国</div>
<div class="val" style="left:1176.8px;top:53.1px">7,424,817</div>
<svg class="bar" style="top:0;left:0" width="1280" height="646"><rect x="82" y="68.3" width="963.5" height="11.4" fill="#b05f22"/></svg>
<svg class="flag" style="left:51.0px;top:68.0px;width:18px" viewBox="0 0 18 12" width="18" height="12"><rect x="0" y="0.00" width="18" height="4.05" fill="#f59a3a"/><rect x="0" y="4.00" width="18" height="4.05" fill="#ffffff"/><rect x="0" y="8.00" width="18" height="4.05" fill="#2a9a2a"/><circle cx="9" cy="6" r="1.5" fill="#7a7ac8"/></svg>
<div class="lbl" style="top:67.6px">インド</div>
<div class="val" style="left:1049.3px;top:68.1px">6,557,231</div>
<svg class="bar" style="top:0;left:0" width="1280" height="646"><rect x="82" y="83.5" width="722.4" height="11.4" fill="#e07820"/></svg>
<svg class="flag" style="left:51.5px;top:83.2px;width:17px" viewBox="0 0 17 12" width="17" height="12"><rect width="17" height="12" fill="#1fa038"/><path d="M8.5 1.6 15.2 6 8.5 10.4 1.8 6z" fill="#f6dc28"/><circle cx="8.5" cy="6" r="2.5" fill="#1a3a8a"/></svg>
<div class="lbl" style="top:82.8px">ブラジル</div>
<div class="val" style="left:808.2px;top:83.3px">4,916,550</div>
<svg class="bar" style="top:0;left:0" width="1280" height="646"><rect x="82" y="98.2" width="177.8" height="11.4" fill="#17a5be"/></svg>
<svg class="flag" style="left:51.0px;top:97.9px;width:18px" viewBox="0 0 18 12" width="18" height="12"><rect x="0" y="0.00" width="18" height="4.05" fill="#ffffff"/><rect x="0" y="4.00" width="18" height="4.05" fill="#2a3ab8"/><rect x="0" y="8.00" width="18" height="4.05" fill="#d22a30"/></svg>
<div class="lbl" style="top:97.5px">ロシア</div>
<div class="val" style="left:263.6px;top:98.0px">1,210,175</div>
<svg class="bar" style="top:0;left:0" width="1280" height="646"><rect x="82" y="113.0" width="125.8" height="11.4" fill="#9467d6"/></svg>
<svg class="flag" style="left:51.0px;top:112.7px;width:18px" viewBox="0 0 18 12" width="18" height="12"><rect x="0" y="0.00" width="18" height="6.05" fill="#f8d820"/><rect x="0" y="6.00" width="18" height="3.05" fill="#2a3a9a"/><rect x="0" y="9.00" width="18" height="3.05" fill="#d02a38"/></svg>
<div class="lbl" style="top:112.3px">コロンビア</div>
<div class="val" style="left:211.6px;top:112.8px">855,802</div>
<svg class="bar" style="top:0;left:0" width="1280" height="646"><rect x="82" y="128.0" width="120.8" height="11.4" fill="#dc3a98"/></svg>
<svg class="flag" style="left:51.0px;top:127.7px;width:18px" viewBox="0 0 18 12" width="18" height="12"><rect x="0.00" y="0" width="6.05" height="12" fill="#d81e28"/><rect x="6.00" y="0" width="6.05" height="12" fill="#ffffff"/><rect x="12.00" y="0" width="6.05" height="12" fill="#d81e28"/></svg>
<div class="lbl" style="top:127.3px">ペルー</div>
<div class="val" style="left:206.6px;top:127.8px">822,261</div>
<svg class="bar" style="top:0;left:0" width="1280" height="646"><rect x="82" y="144.6" width="117.5" height="11.4" fill="#17a5db"/></svg>
<svg class="flag" style="left:50.5px;top:144.3px;width:19px" viewBox="0 0 19 12" width="19" height="12"><rect x="0" y="0.00" width="19" height="4.05" fill="#7ab0e0"/><rect x="0" y="4.00" width="19" height="4.05" fill="#ffffff"/><rect x="0" y="8.00" width="19" height="4.05" fill="#7ab0e0"/><circle cx="9.5" cy="6" r="1.2" fill="#e8b030"/></svg>
<div class="lbl" style="top:143.9px">アルゼンチン</div>
<div class="val" style="left:203.3px;top:144.4px">799,673</div>
<svg class="bar" style="top:0;left:0" width="1280" height="646"><rect x="82" y="156.0" width="116.4" height="11.4" fill="#1aab6a"/></svg>
<svg class="flag" style="left:51.0px;top:155.7px;width:18px" viewBox="0 0 18 12" width="18" height="12"><rect x="0" y="0.00" width="18" height="3.05" fill="#c81a22"/><rect x="0" y="3.00" width="18" height="6.05" fill="#f8c81a"/><rect x="0" y="9.00" width="18" height="3.05" fill="#c81a22"/><rect x="4" y="4.2" width="2.4" height="3.4" fill="#b0502a"/></svg>
<div class="lbl" style="top:155.3px">スペイン</div>
<div class="val" style="left:202.2px;top:155.8px">792,411</div>
<svg class="bar" style="top:0;left:0" width="1280" height="646"><rect x="82" y="172.6" width="112.4" height="11.4" fill="#a3adb3"/></svg>
<svg class="flag" style="left:49.5px;top:172.3px;width:21px" viewBox="0 0 21 12" width="21" height="12"><rect x="0.00" y="0" width="7.05" height="12" fill="#147a48"/><rect x="7.00" y="0" width="7.05" height="12" fill="#ffffff"/><rect x="14.00" y="0" width="7.05" height="12" fill="#d0202c"/><circle cx="10.5" cy="6" r="1.6" fill="#a08050"/></svg>
<div class="lbl" style="top:171.9px">メキシコ</div>
<div class="val" style="left:198.2px;top:172.4px">764,633</div>
<svg class="bar" style="top:0;left:0" width="1280" height="646"><rect x="82" y="187.4" width="100.1" height="11.4" fill="#1fcf7f"/></svg>
<svg class="flag" style="left:51.0px;top:187.1px;width:18px" viewBox="0 0 18 12" width="18" height="12"><rect width="18" height="12" fill="#fff"/><rect width="18" height="4" fill="#e03c31"/><rect y="8" width="18" height="4" fill="#2a3aa0"/><path d="M0 0 7.5 4.9H18V7.1H7.5L0 12z" fill="#fff"/><path d="M0 1.2 6.8 5.2H18V6.8H6.8L0 10.8z" fill="#1a8a4a"/><path d="M0 2.2 5 6 0 9.8z" fill="#f8b81a"/><path d="M0 3.2 3.8 6 0 8.8z" fill="#111"/></svg>
<div class="lbl" style="top:186.7px">南アフリカ</div>
<div class="val" style="left:185.9px;top:187.2px">681,387</div>
<svg class="bar" style="top:0;left:0" width="1280" height="646"><rect x="82" y="202.4" width="89.6" height="11.4" fill="#1ea8df"/></svg>
<svg class="flag" style="left:51.0px;top:202.1px;width:18px" viewBox="0 0 18 12" width="18" height="12"><rect x="0.00" y="0" width="6.05" height="12" fill="#1a2a9a"/><rect x="6.00" y="0" width="6.05" height="12" fill="#ffffff"/><rect x="12.00" y="0" width="6.05" height="12" fill="#e8202c"/></svg>
<div class="lbl" style="top:201.7px">フランス</div>
<div class="val" style="left:175.4px;top:202.2px">609,940</div>
<svg class="bar" style="top:0;left:0" width="1280" height="646"><rect x="82" y="217.0" width="74.5" height="11.4" fill="#1cc0a8"/></svg>
<svg class="flag" style="left:48.0px;top:216.7px;width:24px" viewBox="0 0 24 12" width="24" height="12"><rect width="24" height="12" fill="#24337a"/><path d="M0 0 24 12M24 0 0 12" stroke="#fff" stroke-width="2.4"/><path d="M0 0 24 12M24 0 0 12" stroke="#cf142b" stroke-width="0.9"/><path d="M12 0V12M0 6H24" stroke="#fff" stroke-width="4"/><path d="M12 0V12M0 6H24" stroke="#cf142b" stroke-width="2.4"/></svg>
<div class="lbl" style="top:216.3px">英国</div>
<div class="val" style="left:160.3px;top:216.8px">506,949</div>
<svg class="bar" style="top:0;left:0" width="1280" height="646"><rect x="82" y="235.0" width="69.4" height="11.4" fill="#e03a9a"/></svg>
<div class="lbl" style="top:234.3px">イラン</div>
<div class="val" style="left:155.2px;top:234.8px">472,184</div>
<svg class="bar" style="top:0;left:0" width="1280" height="646"><rect x="82" y="243.8" width="69.1" height="11.4" fill="#e3213f"/></svg>
<svg class="flag" style="left:51.0px;top:244.4px;width:18px" viewBox="0 0 18 12" width="18" height="12"><rect width="18" height="6" fill="#fff"/><rect y="6" width="18" height="6" fill="#d52b1e"/><rect width="6" height="6" fill="#1a3aa0"/><circle cx="3" cy="3" r="1.1" fill="#fff"/></svg>
<div class="lbl" style="top:243.1px">チリ</div>
<div class="val" style="left:154.9px;top:243.6px">470,344</div>
<svg class="bar" style="top:0;left:0" width="1280" height="646"><rect x="82" y="261.6" width="55.8" height="11.4" fill="#b0d957"/></svg>
<svg class="flag" style="left:51.0px;top:261.3px;width:18px" viewBox="0 0 18 12" width="18" height="12"><rect x="0" y="0.00" width="18" height="4.05" fill="#ce1126"/><rect x="0" y="4.00" width="18" height="4.05" fill="#ffffff"/><rect x="0" y="8.00" width="18" height="4.05" fill="#111111"/><rect x="6.5" y="5.3" width="5" height="1.4" fill="#4a9a5a"/></svg>
<div class="lbl" style="top:260.9px">イラク</div>
<div class="val" style="left:141.6px;top:261.4px">379,543</div>
<svg class="bar" style="top:0;left:0" width="1280" height="646"><rect x="82" y="276.4" width="54.2" height="11.4" fill="#a80a8a"/></svg>
<svg class="flag" style="left:50.0px;top:276.1px;width:20px" viewBox="0 0 20 12" width="20" height="12"><rect width="20" height="12" fill="#0a6a4e"/><circle cx="9" cy="6" r="3.6" fill="#f42a41"/></svg>
<div class="lbl" style="top:275.7px">バングラデシュ</div>
<div class="val" style="left:176.6px;top:276.2px">368,842</div>
<svg class="bar" style="top:0;left:0" width="1280" height="646"><rect x="82" y="291.4" width="49.4" height="11.4" fill="#b5b5ad"/></svg>
<svg class="flag" style="left:51.0px;top:291.1px;width:18px" viewBox="0 0 18 12" width="18" height="12"><rect width="18" height="12" fill="#1a8a3a"/><rect x="5" y="3.6" width="8" height="2.6" fill="#bfe0c4"/><rect x="6" y="7.6" width="6" height="0.9" fill="#d8ecd8"/></svg>
<div class="lbl" style="top:290.7px">サウジアラビア</div>
<div class="val" style="left:176.0px;top:291.2px">336,427</div>
<svg class="bar" style="top:0;left:0" width="1280" height="646"><rect x="82" y="309.0" width="47.8" height="11.4" fill="#1fae4b"/></svg>
<svg class="flag" style="left:51.0px;top:308.7px;width:18px" viewBox="0 0 18 12" width="18" height="12"><rect x="0.00" y="0" width="6.05" height="12" fill="#1a9a48"/><rect x="6.00" y="0" width="6.05" height="12" fill="#ffffff"/><rect x="12.00" y="0" width="6.05" height="12" fill="#d82a38"/></svg>
<div class="lbl" style="top:308.3px">イタリア</div>
<div class="val" style="left:134.0px;top:308.8px">325,567</div>
<svg class="bar" style="top:0;left:0" width="1280" height="646"><rect x="82" y="318.6" width="47.7" height="11.4" fill="#b5601f"/></svg>
<svg class="flag" style="left:51.0px;top:318.3px;width:18px" viewBox="0 0 18 12" width="18" height="12"><rect width="18" height="12" fill="#e30a17"/><circle cx="6.6" cy="6" r="3" fill="#fff"/><circle cx="7.4" cy="6" r="2.4" fill="#e30a17"/><circle cx="10.3" cy="6" r="0.9" fill="#fff"/></svg>
<div class="lbl" style="top:317.9px">トルコ</div>
<div class="val" style="left:133.0px;top:318.4px">324,612</div>
<svg class="bar" style="top:0;left:0" width="1280" height="646"><rect x="82" y="336.0" width="46.2" height="11.4" fill="#1a80c0"/></svg>
<svg class="flag" style="left:51.0px;top:335.7px;width:18px" viewBox="0 0 18 12" width="18" height="12"><rect width="18" height="12" fill="#fff"/><rect x="4.5" width="13.5" height="12" fill="#0a5a2a"/><circle cx="11.2" cy="6" r="3.2" fill="#fff"/><circle cx="12.1" cy="5.3" r="2.8" fill="#0a5a2a"/><circle cx="13.2" cy="4.4" r="0.8" fill="#fff"/></svg>
<div class="lbl" style="top:335.3px">パキスタン</div>
<div class="val" style="left:152.6px;top:335.8px">314,733</div>
<svg class="bar" style="top:0;left:0" width="1280" height="646"><rect x="82" y="354.0" width="44.7" height="11.4" fill="#a80a8a"/></svg>
<svg class="flag" style="left:51.0px;top:353.7px;width:18px" viewBox="0 0 18 12" width="18" height="12"><rect x="0" y="0.00" width="18" height="6.05" fill="#e8202c"/><rect x="0" y="6.00" width="18" height="6.05" fill="#ffffff"/></svg>
<div class="lbl" style="top:353.3px">インドネシア</div>
<div class="val" style="left:164.4px;top:353.8px">303,880</div>
<svg class="bar" style="top:0;left:0" width="1280" height="646"><rect x="82" y="363.0" width="44.4" height="11.4" fill="#e3213f"/></svg>
<svg class="flag" style="left:50.0px;top:362.7px;width:20px" viewBox="0 0 20 12" width="20" height="12"><rect x="0" y="0.00" width="20" height="4.05" fill="#111111"/><rect x="0" y="4.00" width="20" height="4.05" fill="#dd0a14"/><rect x="0" y="8.00" width="20" height="4.05" fill="#ffce00"/></svg>
<div class="lbl" style="top:362.3px">ドイツ</div>
<div class="val" style="left:130.0px;top:362.8px">301,900</div>
<svg class="bar" style="top:0;left:0" width="1280" height="646"><rect x="82" y="380.0" width="39.3" height="11.4" fill="#d9102f"/></svg>
<svg class="flag" style="left:52.0px;top:379.7px;width:16px" viewBox="0 0 16 12" width="16" height="12"><rect width="16" height="12" fill="#fff"/><rect y="1.4" width="16" height="1.7" fill="#2a4ab8"/><rect y="8.9" width="16" height="1.7" fill="#2a4ab8"/><path d="M8 3.9 9.8 7H6.2zM8 8.1 6.2 5H9.8z" fill="none" stroke="#2a4ab8" stroke-width="0.6"/></svg>
<div class="lbl" style="top:379.3px">イスラエル</div>
<div class="val" style="left:153.0px;top:379.8px">267,359</div>
<svg class="bar" style="top:0;left:0" width="1280" height="646"><rect x="82" y="395.0" width="34.2" height="11.4" fill="#1a80c0"/></svg>
<svg class="flag" style="left:51.0px;top:394.7px;width:18px" viewBox="0 0 18 12" width="18" height="12"><rect x="0" y="0.00" width="18" height="6.05" fill="#2a6ac8"/><rect x="0" y="6.00" width="18" height="6.05" fill="#f8d820"/></svg>
<div class="lbl" style="top:394.3px">ウクライナ</div>
<div class="val" style="left:152.4px;top:394.8px">232,836</div>
<svg class="bar" style="top:0;left:0" width="1280" height="646"><rect x="82" y="410.0" width="24.8" height="11.4" fill="#1a7ab5"/></svg>
<svg class="flag" style="left:48.0px;top:409.7px;width:24px" viewBox="0 0 24 12" width="24" height="12"><rect width="24" height="12" fill="#fff"/><rect width="6" height="12" fill="#e8202c"/><rect x="18" width="6" height="12" fill="#e8202c"/><path d="M12 2 13 4 14.3 3.6 13.8 6 15.5 5.5 15 6.8 16 7.3 13.5 8.8 13.8 9.6 12.3 9.4V10.6H11.7V9.4L10.2 9.6 10.5 8.8 8 7.3 9 6.8 8.5 5.5 10.2 6 9.7 3.6 11 4z" fill="#e8202c"/></svg>
<div class="lbl" style="top:409.3px">カナダ</div>
<div class="val" style="left:130.0px;top:409.8px">168,805</div>
<svg class="bar" style="top:0;left:0" width="1280" height="646"><rect x="82" y="425.0" width="20.7" height="11.4" fill="#9467d6"/></svg>
<svg class="flag" style="left:51.0px;top:424.7px;width:18px" viewBox="0 0 18 12" width="18" height="12"><rect x="0" y="0.00" width="18" height="6.05" fill="#f8d820"/><rect x="0" y="6.00" width="18" height="3.05" fill="#2a4aa8"/><rect x="0" y="9.00" width="18" height="3.05" fill="#e0202c"/><ellipse cx="9" cy="6" rx="1.8" ry="2" fill="#8a7a5a"/></svg>
<div class="lbl" style="top:424.3px">エクアドル</div>
<div class="val" style="left:153.6px;top:424.8px">141,066</div>
<svg class="bar" style="top:0;left:0" width="1280" height="646"><rect x="82" y="441.6" width="20.1" height="11.4" fill="#e8981a"/></svg>
<svg class="flag" style="left:51.0px;top:441.3px;width:18px" viewBox="0 0 18 12" width="18" height="12"><rect x="0" y="0.00" width="18" height="4.05" fill="#d82a20"/><rect x="0" y="4.00" width="18" height="4.05" fill="#f8e020"/><rect x="0" y="8.00" width="18" height="4.05" fill="#1a8a30"/></svg>
<div class="lbl" style="top:440.9px">ボリビア</div>
<div class="val" style="left:141.6px;top:441.4px">136,893</div>
<svg class="bar" style="top:0;left:0" width="1280" height="646"><rect x="82" y="453.0" width="20.0" height="11.4" fill="#e8981a"/></svg>
<svg class="flag" style="left:51.0px;top:452.7px;width:18px" viewBox="0 0 18 12" width="18" height="12"><rect x="0.00" y="0" width="6.05" height="12" fill="#1a2a9a"/><rect x="6.00" y="0" width="6.05" height="12" fill="#f8d020"/><rect x="12.00" y="0" width="6.05" height="12" fill="#d8202c"/></svg>
<div class="lbl" style="top:452.3px">ルーマニア</div>
<div class="val" style="left:153.6px;top:452.8px">136,068</div>
<svg class="bar" style="top:0;left:0" width="1280" height="646"><rect x="82" y="469.6" width="19.6" height="11.4" fill="#e8981a"/></svg>
<svg class="flag" style="left:51.0px;top:469.3px;width:18px" viewBox="0 0 18 12" width="18" height="12"><rect width="18" height="12" fill="#c1272d"/><path d="M9 3.4 10.5 8 6.6 5.2H11.4L7.5 8z" fill="none" stroke="#5a6a2a" stroke-width="0.5"/></svg>
<div class="lbl" style="top:468.9px">モロッコ</div>
<div class="val" style="left:140.6px;top:469.4px">133,422</div>
<svg class="bar" style="top:0;left:0" width="1280" height="646"><rect x="82" y="485.0" width="19.2" height="11.4" fill="#a583d0"/></svg>
<svg class="flag" style="left:53.0px;top:484.7px;width:14px" viewBox="0 0 14 12" width="14" height="12"><rect x="0.00" y="0" width="4.72" height="12" fill="#111111"/><rect x="4.67" y="0" width="4.72" height="12" fill="#f8d020"/><rect x="9.33" y="0" width="4.72" height="12" fill="#e8303c"/></svg>
<div class="lbl" style="top:484.3px">ベルギー</div>
<div class="val" style="left:141.4px;top:484.8px">130,443</div>
<svg class="bar" style="top:0;left:0" width="1280" height="646"><rect x="82" y="499.0" width="18.6" height="11.4" fill="#d94fb0"/></svg>
<svg class="flag" style="left:45.0px;top:498.7px;width:30px" viewBox="0 0 30 12" width="30" height="12"><rect width="30" height="12" fill="#fff"/><path d="M9 0H30V12H9L11.5 11.33 9 10.67 11.5 10 9 9.33 11.5 8.67 9 8 11.5 7.33 9 6.67 11.5 6 9 5.33 11.5 4.67 9 4 11.5 3.33 9 2.67 11.5 2 9 1.33 11.5 0.67z" fill="#8a1538"/></svg>
<div class="lbl" style="top:498.3px">カタール</div>
<div class="val" style="left:141.4px;top:498.8px">126,518</div>
<svg class="bar" style="top:0;left:0" width="1280" height="646"><rect x="82" y="514.0" width="16.9" height="11.4" fill="#1a86c4"/></svg>
<svg class="flag" style="left:51.0px;top:513.7px;width:18px" viewBox="0 0 18 12" width="18" height="12"><rect width="18" height="12" fill="#fff"/><rect x="9" width="9" height="6" fill="#d8202c"/><rect y="6" width="9" height="6" fill="#1a2a7a"/><circle cx="4.5" cy="3" r="1.1" fill="#1a2a7a"/><circle cx="13.5" cy="9" r="1.1" fill="#d8202c"/></svg>
<div class="lbl" style="top:513.3px">パナマ</div>
<div class="val" style="left:130.0px;top:513.8px">115,353</div>
<svg class="bar" style="top:0;left:0" width="1280" height="646"><rect x="82" y="528.6" width="15.9" height="11.4" fill="#8c5a32"/></svg>
<svg class="flag" style="left:48.0px;top:528.3px;width:24px" viewBox="0 0 24 12" width="24" height="12"><rect width="24" height="12" fill="#2ac0c8"/><circle cx="12.5" cy="5.4" r="2.1" fill="#e8d838"/><path d="M8.5 8.2Q12.5 10.6 16.5 8.2Q12.5 9.4 8.5 8.2z" fill="#e8d838"/></svg>
<div class="lbl" style="top:527.9px">カザフスタン</div>
<div class="val" style="left:165.0px;top:528.4px">108,242</div>
<svg class="bar" style="top:0;left:0" width="1280" height="646"><rect x="82" y="543.6" width="15.7" height="11.4" fill="#9a6ad8"/></svg>
<svg class="flag" style="left:48.0px;top:543.3px;width:24px" viewBox="0 0 24 12" width="24" height="12"><rect x="0" y="0.00" width="24" height="4.05" fill="#1a8a3a"/><rect x="0" y="4.00" width="24" height="4.05" fill="#ffffff"/><rect x="0" y="8.00" width="24" height="4.05" fill="#d8202c"/><path d="M0 0 6 4V8L0 12z" fill="#111"/></svg>
<div class="lbl" style="top:542.9px">クウェート</div>
<div class="val" style="left:152.4px;top:543.4px">107,085</div>
<svg class="bar" style="top:0;left:0" width="1280" height="646"><rect x="82" y="558.6" width="15.2" height="11.4" fill="#a5adb5"/></svg>
<svg class="flag" style="left:51.0px;top:558.3px;width:18px" viewBox="0 0 18 12" width="18" height="12"><rect x="0" y="0.00" width="18" height="4.05" fill="#d8202c"/><rect x="0" y="4.00" width="18" height="4.05" fill="#ffffff"/><rect x="0" y="8.00" width="18" height="4.05" fill="#111111"/><rect x="8.2" y="4.8" width="1.6" height="2.4" fill="#c8a030"/></svg>
<div class="lbl" style="top:557.9px">エジプト</div>
<div class="val" style="left:141.0px;top:558.4px">103,693</div>
<svg class="bar" style="top:0;left:0" width="1280" height="646"><rect x="82" y="575.0" width="14.9" height="11.4" fill="#d8c84a"/></svg>
<svg class="flag" style="left:48.0px;top:574.7px;width:24px" viewBox="0 0 24 12" width="24" height="12"><rect width="24" height="12" fill="#fff"/><rect y="8" width="24" height="4" fill="#1a8a3a"/><rect x="6" y="4" width="18" height="4" fill="#e0202c"/><rect width="6.5" height="12" fill="#e0202c"/><rect x="1.8" y="1.4" width="2.6" height="2.4" fill="#f8c8c8"/></svg>
<div class="lbl" style="top:574.3px">オマーン</div>
<div class="val" style="left:141.0px;top:574.8px">101,327</div>
<svg class="bar" style="top:0;left:0" width="1280" height="646"><rect x="82" y="586.6" width="14.7" height="11.4" fill="#b06520"/></svg>
<svg class="flag" style="left:50.0px;top:586.3px;width:20px" viewBox="0 0 20 12" width="20" height="12"><rect x="0" y="0.00" width="20" height="6.05" fill="#ffffff"/><rect x="0" y="6.00" width="20" height="6.05" fill="#dc143c"/></svg>
<div class="lbl" style="top:585.9px">ポーランド</div>
<div class="val" style="left:153.6px;top:586.4px">100,286</div>
<svg class="bar" style="top:0;left:0" width="1280" height="646"><rect x="82" y="603.0" width="13.9" height="11.4" fill="#1fcf85"/></svg>
<svg class="flag" style="left:50.5px;top:602.7px;width:19px" viewBox="0 0 19 12" width="19" height="12"><rect width="19" height="12" fill="#1a6ab0"/><rect x="5.2" width="2.6" height="12" fill="#f8d020"/><rect y="4.7" width="19" height="2.6" fill="#f8d020"/></svg>
<div class="lbl" style="top:602.3px">スウェーデン</div>
<div class="val" style="left:165.0px;top:602.8px">94,283</div>
<svg class="bar" style="top:0;left:0" width="1280" height="646"><rect x="82" y="618.0" width="13.8" height="11.4" fill="#dc0f32"/></svg>
<svg class="flag" style="left:50.5px;top:617.7px;width:19px" viewBox="0 0 19 12" width="19" height="12"><rect x="0.00" y="0" width="6.38" height="12" fill="#6aaae0"/><rect x="6.33" y="0" width="6.38" height="12" fill="#ffffff"/><rect x="12.67" y="0" width="6.38" height="12" fill="#6aaae0"/><circle cx="9.5" cy="6" r="1.7" fill="#b8c8a0"/></svg>
<div class="lbl" style="top:617.3px">グアテマラ</div>
<div class="val" style="left:152.4px;top:617.8px">93,986</div>
<svg class="bar" style="top:0;left:0" width="1280" height="646"><rect x="82" y="638.0" width="12.8" height="11.4" fill="#a00a80"/></svg>
<svg class="flag" style="left:55.0px;top:637.7px;width:10px" viewBox="0 0 10 12" width="10" height="12"><path d="M0.4 0.4 9 5.2H3.6L9 11.6H0.4z" fill="#c8143c" stroke="#2a2a8a" stroke-width="0.7"/><circle cx="2.8" cy="8.6" r="1.1" fill="#fff"/><circle cx="2.6" cy="4" r="0.8" fill="#fff"/></svg>
<div class="lbl" style="top:637.3px">ネパール</div>
<div class="val" style="left:141.4px;top:637.8px">87,081</div>
<svg class="flag" style="left:50.0px;top:234.7px;width:20px" viewBox="0 0 20 12" width="20" height="12"><rect x="0" y="0.00" width="20" height="4.05" fill="#239f40"/><rect x="0" y="4.00" width="20" height="4.05" fill="#ffffff"/><rect x="0" y="8.00" width="20" height="4.05" fill="#da0000"/><circle cx="10" cy="6" r="1.1" fill="#da4040"/></svg>
</div>
<div class="tl" style="left:59px;top:661.5px;width:1114px;height:1px;background:#cfd4d6"></div>
<div class="tl" style="left:1172.5px;top:658px;width:1px;height:4px;background:#cfd4d6"></div>
<div class="tl" style="left:59px;top:660.6px;width:756px;height:1.6px;background:#222"></div>
<div class="tick" style="left:114.6px"></div>
<div class="tlab" style="left:114.6px">08月01日</div>
<div class="tick" style="left:449px"></div>
<div class="tlab" style="left:449px">09月01日</div>
<div class="tick" style="left:773.5px"></div>
<div class="tlab" style="left:773.5px">10月01日</div>
<div class="tick" style="left:1108px"></div>
<div class="tlab" style="left:1108px">11月01日</div>
<div class="tot1">世界合計</div><div class="tot2">35,091,037</div>
<div class="date">2020年10月06日</div>
</div>
<div style="position:absolute;left:1267px;top:0;width:13px;height:720px;background:#f1f1f1"></div>
<div style="position:absolute;left:1270.3px;top:348.2px;width:8.4px;height:353px;background:#a6a6a6"></div>
<div style="position:absolute;left:1279px;top:366px;width:1px;height:11px;background:#555"></div>
<svg style="position:absolute;left:1267px;top:0" width="13" height="720"><path d="M4.8 8.2 7.5 4.8 10.2 8.2z" fill="#404040"/><path d="M4.8 711.3 7.5 714.7 10.2 711.3z" fill="#404040"/></svg>
</body></html>
